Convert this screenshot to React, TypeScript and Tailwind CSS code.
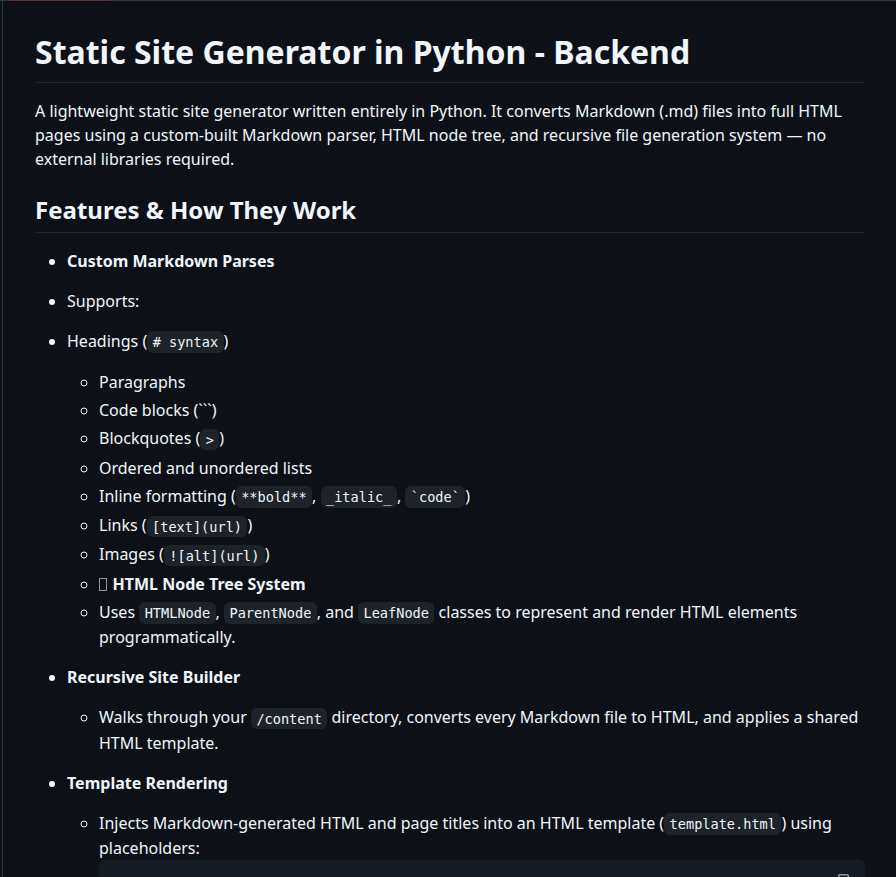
import React from "react";

function C({ children }: { children: React.ReactNode }) {
  return (
    <code className="rounded-md bg-[#656c7633] px-[0.4em] py-[0.2em] align-[-0.4px] text-[13.6px] font-['DejaVu_Sans_Mono',monospace] whitespace-break-spaces">
      {children}
    </code>
  );
}

function Sub({ children, first }: { children: React.ReactNode; first?: boolean }) {
  return <li className={first ? "" : "mt-1"}>{children}</li>;
}

function Tofu() {
  return <span className="mr-[5.5px] inline-block h-[13px] w-[8px] border border-[#8b949e] align-[-1px]" />;
}

export default function App() {
  return (
    <div className="relative h-[877px] overflow-hidden bg-[#0d1117] text-[16px] leading-6 text-[#f0f6fc] font-['Noto_Sans',sans-serif]">
      <div className="absolute left-0 top-0 h-px w-full bg-[#30363d]" />
      <div className="absolute left-[10px] top-0 h-px w-[99px] bg-[#6e2a2a]" />
      <div className="ml-[2px] h-full border-l border-[#30363d] pl-[32px] pr-[31px] pt-[32px]">
        <h1 className="mb-4 border-b border-[#21262d] pb-[9.6px] text-[32px] font-bold leading-[40px]">
          Static Site Generator in Python - Backend
        </h1>
        <p className="mb-4">
          A lightweight static site generator written entirely in Python. It converts Markdown (.md) files into full HTML
          pages using a custom-built Markdown parser, HTML node tree, and recursive file generation system — no
          external libraries required.
        </p>
        <h2 className="mb-4 mt-6 border-b border-[#21262d] pb-[7.2px] text-[24px] font-bold leading-[30px]">
          Features &amp; How They Work
        </h2>
        <ul className="list-disc pl-8">
          <li>
            <p className="mt-4"><strong className="font-bold">Custom Markdown Parses</strong></p>
          </li>
          <li className="mt-1">
            <p className="mt-4">Supports:</p>
          </li>
          <li className="mt-1">
            <p className="mt-4">Headings (<C># syntax</C>)</p>
            <ul className="mb-4 mt-4 list-[circle] pl-8">
              <Sub first>Paragraphs</Sub>
              <Sub>Code blocks (```)</Sub>
              <Sub>Blockquotes (<C>&gt;</C>)</Sub>
              <Sub>Ordered and unordered lists</Sub>
              <Sub>Inline formatting (<C>**bold**</C>, <C>_italic_</C>, <C>`code`</C>)</Sub>
              <Sub>Links (<C>[text](url)</C>)</Sub>
              <Sub>Images (<C>![alt](url)</C>)</Sub>
              <Sub><Tofu /><strong className="font-bold">HTML Node Tree System</strong></Sub>
              <Sub>Uses <C>HTMLNode</C>, <C>ParentNode</C>, and <C>LeafNode</C> classes to represent and render HTML elements programmatically.</Sub>
            </ul>
          </li>
          <li className="mt-1">
            <p className="mt-4"><strong className="font-bold">Recursive Site Builder</strong></p>
            <ul className="mb-4 mt-4 list-[circle] pl-8">
              <Sub first>Walks through your <C>/content</C> directory, converts every Markdown file to HTML, and applies a shared HTML template.</Sub>
            </ul>
          </li>
          <li className="mt-1">
            <p className="mt-4"><strong className="font-bold">Template Rendering</strong></p>
            <ul className="mb-4 mt-4 list-[circle] pl-8">
              <li>
                Injects Markdown-generated HTML and page titles into an HTML template (<C>template.html</C>) using placeholders:
                <div className="relative mb-4 h-[120px] rounded-md bg-[#151b23]">
                  <svg className="absolute right-[16px] top-[14px] text-[#9198a1]" width="16" height="16" viewBox="0 0 16 16" fill="currentColor">
                    <path d="M0 6.75C0 5.784.784 5 1.75 5h1.5a.75.75 0 0 1 0 1.5h-1.5a.25.25 0 0 0-.25.25v7.5c0 .138.112.25.25.25h7.5a.25.25 0 0 0 .25-.25v-1.5a.75.75 0 0 1 1.5 0v1.5A1.75 1.75 0 0 1 9.25 16h-7.5A1.75 1.75 0 0 1 0 14.25Z" />
                    <path d="M5 1.75C5 .784 5.784 0 6.75 0h7.5C15.216 0 16 .784 16 1.75v7.5A1.75 1.75 0 0 1 14.25 11h-7.5A1.75 1.75 0 0 1 5 9.25Zm1.75-.25a.25.25 0 0 0-.25.25v7.5c0 .138.112.25.25.25h7.5a.25.25 0 0 0 .25-.25v-7.5a.25.25 0 0 0-.25-.25Z" />
                  </svg>
                </div>
              </li>
            </ul>
          </li>
        </ul>
      </div>
    </div>
  );
}
